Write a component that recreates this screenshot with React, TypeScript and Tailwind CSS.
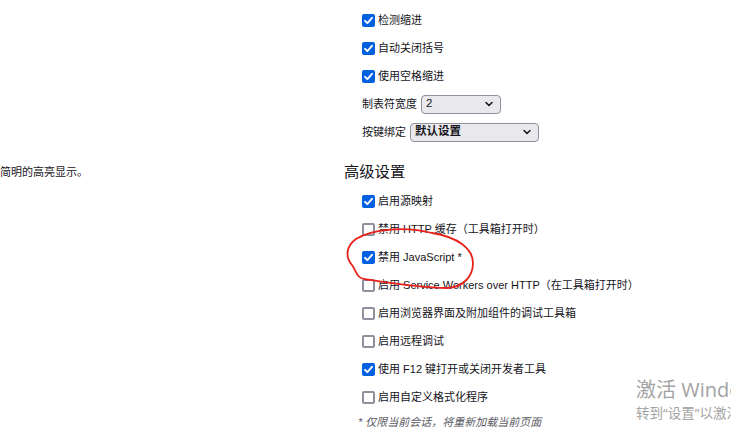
import React from 'react';

const font = "font-['Liberation_Sans','Noto_Sans_CJK_SC',sans-serif]";

function Check({ checked }: { checked?: boolean }) {
    if (checked) {
        return (
            <span className="flex h-[13px] w-[13px] shrink-0 items-center justify-center rounded-[2px] bg-[#0060df]">
                <svg width="11" height="11" viewBox="0 0 11 11">
                    <path d="M2 5.8 L4.4 8.2 L9 2.8" fill="none" stroke="white" strokeWidth="1.9" strokeLinecap="round" strokeLinejoin="round" />
                </svg>
            </span>
        );
    }
    return <span className="h-[13px] w-[13px] shrink-0 rounded-[2px] border-2 border-[#8f8f9d] bg-white" />;
}

function Row({ label, checked }: { label: string; checked?: boolean }) {
    return (
        <div className="flex h-[28px] items-center gap-[3px]">
            <Check checked={checked} />
            <span>{label}</span>
        </div>
    );
}

function Chevron() {
    return (
        <svg width="10" height="10" viewBox="0 0 10 10">
            <path d="M2 3.5 L5 6.5 L8 3.5" fill="none" stroke="#15141a" strokeWidth="1.5" strokeLinecap="round" strokeLinejoin="round" />
        </svg>
    );
}

function Select({ value, width, bold }: { value: string; width: string; bold?: boolean }) {
    return (
        <div className={`flex h-[19px] ${width} items-center justify-between rounded-[4px] border border-[#8f8f9d] bg-[#e9e9ed] pl-[4px] pr-[6px] text-[11.5px]`}>
            <span className={bold ? 'font-bold' : ''}>{value}</span>
            <Chevron />
        </div>
    );
}

export default function App() {
    return (
        <div className={`relative h-[447px] w-[731px] overflow-hidden bg-white text-[11px] text-[#15141a] ${font}`}>
            <div className="flex">
                <div className="w-[344px] shrink-0 pt-[162px]">
                    <span className="block leading-[20px]">简明的高亮显示。</span>
                </div>
                <div className="flex flex-col">
                    <div className="flex flex-col pl-[18px] pt-[6px]">
                        <Row label="检测缩进" checked />
                        <Row label="自动关闭括号" checked />
                        <Row label="使用空格缩进" checked />
                        <div className="flex h-[28px] items-center gap-[4px]">
                            <span>制表符宽度</span>
                            <Select value="2" width="w-[80px]" />
                        </div>
                        <div className="flex h-[28px] items-center gap-[4px]">
                            <span>按键绑定</span>
                            <Select value="默认设置" width="w-[129px]" bold />
                        </div>
                    </div>
                    <h2 className="mt-[14px] h-[24px] text-[15.3px] leading-[24px]">高级设置</h2>
                    <div className="mt-[3px] flex flex-col pl-[18px]">
                        <Row label="启用源映射" checked />
                        <Row label="禁用 HTTP 缓存（工具箱打开时）" />
                        <Row label="禁用 JavaScript *" checked />
                        <Row label="启用 Service Workers over HTTP（在工具箱打开时）" />
                        <Row label="启用浏览器界面及附加组件的调试工具箱" />
                        <Row label="启用远程调试" />
                        <Row label="使用 F12 键打开或关闭开发者工具" checked />
                        <Row label="启用自定义格式化程序" />
                        <div className="flex h-[22px] items-center italic text-[#5b5b66]">
                            <span className="-ml-[4px]">* 仅限当前会话，将重新加载当前页面</span>
                        </div>
                    </div>
                </div>
            </div>

            <svg className="pointer-events-none absolute left-0 top-0" width="731" height="447">
                <path
                    d="M432 233 C405 226 372 229 356 239 C346 246 345 257 352 265 C357 272 356 277 364 279 C390 283 420 288 447 288 C464 287 473 276 473 263 C473 249 458 237 432 233"
                    fill="none"
                    stroke="#e8211b"
                    strokeWidth="1.8"
                    strokeLinecap="round"
                />
            </svg>

            <div className="pointer-events-none absolute left-[636px] top-[378px] w-[95px] overflow-hidden whitespace-nowrap text-[#a3a3a3] font-['Open_Sans','Noto_Sans_CJK_SC',sans-serif]">
                <div className="text-[20px] leading-[24px]">激活 Windows</div>
                <div className="mt-[1px] text-[13.5px] leading-[20px]">转到“设置”以激活 Windows。</div>
            </div>
        </div>
    );
}
